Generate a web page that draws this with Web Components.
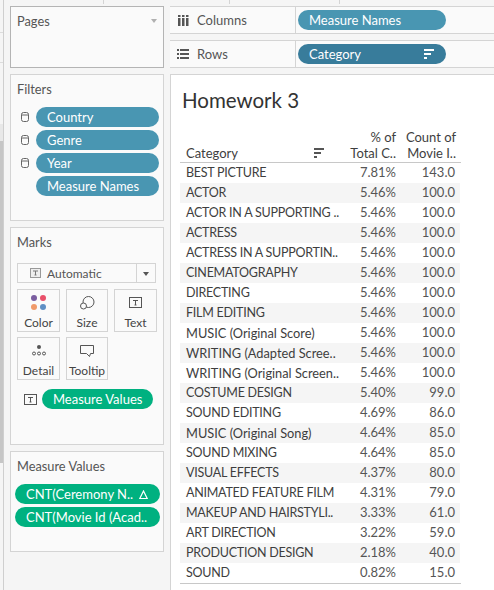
<!DOCTYPE html>
<html>
<head>
<meta charset="utf-8">
<title>Homework 3</title>
<style>
  html, body { margin: 0; padding: 0; height: 100%; }
  body {
    background: #f5f5f5;
    font-family: Lato, "Liberation Sans", sans-serif;
    color: #444;
    overflow: hidden;
  }
</style>
</head>
<body>
<tab-workspace></tab-workspace>

<script>
const FONT = 'Lato, "Liberation Sans", sans-serif';

const ICONS = {
  db: '<svg width="8" height="10" viewBox="0 0 8 10" fill="none" stroke="#666" stroke-width="1"><rect x=".5" y=".5" width="7" height="9" rx="2"/><path d="M.5 3h7"/></svg>',
  text: '<svg width="13" height="11" viewBox="0 0 13 11" fill="none" stroke="#555"><rect x=".5" y=".5" width="12" height="10"/><path d="M4 3.5h5M6.5 3.5v4.5M5.5 8h2"/></svg>',
  textSmall: '<svg width="11" height="10" viewBox="0 0 11 10"><rect x=".5" y=".5" width="10" height="9" fill="#eee" stroke="#999"/><path d="M3 3h5M5.5 3v4M4.5 7h2" fill="none" stroke="#777"/></svg>',
  sort: c => `<svg width="10" height="10" viewBox="0 0 10 10" fill="${c}"><rect width="10" height="2"/><rect y="4" width="7" height="2"/><rect y="8" width="3" height="2"/></svg>`
};

class TabPill extends HTMLElement {
  constructor() {
    super();
    this.attachShadow({ mode: 'open' }).innerHTML = `
      <style>
        :host {
          display: flex;
          align-items: center;
          height: 20px;
          border-radius: 10px;
          background: var(--pill, #4996b2);
          color: #fff;
          font: 13px ${FONT};
          padding: 0 12px 0 11px;
          box-sizing: border-box;
          white-space: nowrap;
        }
        :host([dark]) { --pill: #387c9b; }
        :host([green]) { --pill: #00b180; }
        .t { flex: 1; }
      </style>
      <span class="t"><slot></slot></span><slot name="end"></slot>`;
  }
}
customElements.define('tab-pill', TabPill);

class TabCard extends HTMLElement {
  constructor() {
    super();
    this.attachShadow({ mode: 'open' }).innerHTML = `
      <style>
        :host {
          display: block;
          box-sizing: border-box;
          background: #fafafa;
          border: 1px solid #d4d4d4;
          padding: 6px 4px 0 6px;
          height: var(--h);
          margin-bottom: 6px;
          position: relative;
        }
        :host([dark]) { border-color: #b4b4b4; }
        h3 {
          margin: 0;
          font: 400 12.8px/16px ${FONT};
          color: #555;
        }
      </style>
      <h3>${this.getAttribute('title') || ''}</h3>
      <slot></slot>`;
  }
}
customElements.define('tab-card', TabCard);

class MarkBtn extends HTMLElement {
  constructor() {
    super();
    this.attachShadow({ mode: 'open' }).innerHTML = `
      <style>
        :host {
          display: flex;
          flex-direction: column;
          align-items: center;
          box-sizing: border-box;
          height: 43px;
          background: #fafafa;
          border: 1px solid #d4d4d4;
          font: 12px/16px ${FONT};
          color: #444;
        }
        .i { height: 25px; display: flex; align-items: center; justify-content: center; }
      </style>
      <div class="i"><slot name="icon"></slot></div>
      <slot></slot>`;
  }
}
customElements.define('mark-btn', MarkBtn);

class ShelfRow extends HTMLElement {
  constructor() {
    super();
    this.attachShadow({ mode: 'open' }).innerHTML = `
      <style>
        :host {
          display: flex;
          height: 28px;
          box-sizing: border-box;
          background: #fafafa;
          border-top: 1px solid #d4d4d4;
          border-bottom: 1px solid #d4d4d4;
        }
        .label {
          width: 126px;
          box-sizing: border-box;
          border-right: 1px solid #d4d4d4;
          display: flex;
          align-items: center;
          gap: 7px;
          padding-left: 7px;
          font: 13px ${FONT};
          color: #555;
        }
        .pills { padding: 3px 0 0 2px; }
        ::slotted(tab-pill) { width: 148px; }
      </style>
      <div class="label"><slot name="icon"></slot>${this.getAttribute('label')}</div>
      <div class="pills"><slot></slot></div>`;
  }
}
customElements.define('shelf-row', ShelfRow);

const ROWS = [
  ['BEST PICTURE', '7.81%', '143.0'],
  ['ACTOR', '5.46%', '100.0'],
  ['ACTOR IN A SUPPORTING ..', '5.46%', '100.0'],
  ['ACTRESS', '5.46%', '100.0'],
  ['ACTRESS IN A SUPPORTIN..', '5.46%', '100.0'],
  ['CINEMATOGRAPHY', '5.46%', '100.0'],
  ['DIRECTING', '5.46%', '100.0'],
  ['FILM EDITING', '5.46%', '100.0'],
  ['MUSIC (Original Score)', '5.46%', '100.0'],
  ['WRITING (Adapted Scree..', '5.46%', '100.0'],
  ['WRITING (Original Screen..', '5.46%', '100.0'],
  ['COSTUME DESIGN', '5.40%', '99.0'],
  ['SOUND EDITING', '4.69%', '86.0'],
  ['MUSIC (Original Song)', '4.64%', '85.0'],
  ['SOUND MIXING', '4.64%', '85.0'],
  ['VISUAL EFFECTS', '4.37%', '80.0'],
  ['ANIMATED FEATURE FILM', '4.31%', '79.0'],
  ['MAKEUP AND HAIRSTYLI..', '3.33%', '61.0'],
  ['ART DIRECTION', '3.22%', '59.0'],
  ['PRODUCTION DESIGN', '2.18%', '40.0'],
  ['SOUND', '0.82%', '15.0']
];

class ViewTable extends HTMLElement {
  constructor() {
    super();
    const body = ROWS.map(r => `
      <div class="row"><span class="c${/[a-z]/.test(r[0]) ? ' mixed' : ''}">${r[0]}</span><span class="n">${r[1]}</span><span class="m">${r[2]}</span></div>`).join('');
    this.attachShadow({ mode: 'open' }).innerHTML = `
      <style>
        :host {
          display: block;
          width: 281px;
          font: 13px/16px ${FONT};
          color: #3e3e3e;
          border-bottom: 1px solid #c8c8c8;
        }
        .head {
          display: grid;
          grid-template-columns: 150px 66px 60px;
          height: 32px;
          align-items: end;
          border-bottom: 1px solid #c8c8c8;
          padding: 0 0 1px 0;
        }
        .head .hc { padding-left: 6px; display: flex; justify-content: space-between; align-items: center; padding-right: 6px; }
        .head .r { text-align: right; }
        .row {
          display: grid;
          grid-template-columns: 150px 66px 59px;
          height: 20px;
          align-items: center;
          width: 280px;
        }
        .row:nth-child(even) { background: #f5f5f5; }
        .c { padding-left: 6px; white-space: nowrap; font-size: 12.5px; letter-spacing: -.25px; }
        .c.mixed { font-size: 12.8px; letter-spacing: 0; }
        .n, .m { text-align: right; color: #555; padding-bottom: 2px; }
      </style>
      <div class="head">
        <div class="hc"><span>Category</span>${ICONS.sort('#555')}</div>
        <div class="r">% of<br>Total C..</div>
        <div class="r">Count of<br>Movie I..</div>
      </div>
      <div>${body}</div>`;
  }
}
customElements.define('view-table', ViewTable);

class TabWorkspace extends HTMLElement {
  constructor() {
    super();
    this.attachShadow({ mode: 'open' }).innerHTML = `
      <style>
        :host {
          display: grid;
          grid-template-columns: 170px 1fr;
          height: 590px;
          width: 494px;
          overflow: hidden;
          position: relative;
        }
        .side { padding: 6px 6px 0 10px; }
        .main { padding-top: 6px; display: flex; flex-direction: column; }
        .gap { height: 6px; }
        .strip {
          position: absolute; left: 0; top: 0; bottom: 0; width: 3px;
          border-right: 1px solid #cfcfcf;
        }
        .strip b { position: absolute; left: 0; width: 3px; height: 1px; background: #dcdcdc; }
        .strip i { position: absolute; left: 0; width: 3px; top: 124px; height: 17px; background: #e8e8e8; }
        .strip u { position: absolute; left: 0; width: 3px; top: 141px; height: 322px; background: #c6c6c6; }
        .tick { position: absolute; top: 0; width: 1px; height: 4px; background: #d4d4d4; }
        .view {
          flex: 1;
          background: #fff;
          border-top: 1px solid #d4d4d4;
          border-left: 1px solid #d4d4d4;
          margin-top: 6px;
          padding: 12px 0 0 9px;
        }
        h1 {
          margin: 0 0 16px 2px;
          font: 400 20.5px/26px ${FONT};
          color: #333;
        }
        .caret {
          position: absolute; right: 6px; top: 12px;
          width: 0; height: 0;
          border: 3.5px solid transparent; border-top: 4px solid #b0b0b0;
        }
        .pills { display: flex; flex-direction: column; gap: 3px; margin-top: 10px; }
        .f { display: flex; align-items: center; height: 20px; gap: 7px; margin-left: 4px; }
        .f span.ic { width: 8px; display: flex; }
        .f tab-pill { flex: 1; }
        .dd {
          margin: 13px 0 0 0;
          width: 139px;
          height: 20px;
          box-sizing: border-box;
          border: 1px solid #d4d4d4;
          background: #fafafa;
          display: flex;
          align-items: center;
          font: 12px ${FONT};
          color: #555;
          padding-left: 12px;
          gap: 6px;
        }
        .dd .a { margin-left: auto; width: 18px; height: 18px; border-left: 1px solid #d4d4d4; display: flex; align-items: center; justify-content: center; }
        .dd .a i { border: 3.5px solid transparent; border-top: 4px solid #555; margin-top: 4px; }
        .btns { display: grid; grid-template-columns: 43px 42px 43px; gap: 5px 6px; margin-top: 6px; width: 140px; }
        .mv { display: flex; align-items: center; gap: 5px; margin: 9px 0 0 7px; }
        .mv tab-pill { width: 111px; }
        .mvp { display: flex; flex-direction: column; gap: 3px; margin: 10px -1px 0 -2px; }
      </style>
      <div class="strip"><b style="top:32px"></b><b style="top:62px"></b><i></i><u></u></div>
      <div class="tick" style="left:103px"></div>
      <div class="tick" style="left:229px"></div>
      <div class="tick" style="left:339px"></div>
      <div class="side">
        <tab-card title="Pages" dark style="--h:62px"><div class="caret"></div></tab-card>
        <tab-card title="Filters" style="--h:147px">
          <div class="pills">
            <div class="f"><span class="ic">${ICONS.db}</span><tab-pill>Country</tab-pill></div>
            <div class="f"><span class="ic">${ICONS.db}</span><tab-pill>Genre</tab-pill></div>
            <div class="f"><span class="ic">${ICONS.db}</span><tab-pill>Year</tab-pill></div>
            <div class="f"><span class="ic"></span><tab-pill>Measure Names</tab-pill></div>
          </div>
        </tab-card>
        <tab-card title="Marks" style="--h:218px">
          <div class="dd">${ICONS.textSmall}Automatic<span class="a"><i></i></span></div>
          <div class="btns">
            <mark-btn>
              <svg slot="icon" width="15" height="15" viewBox="0 0 15 15"><circle cx="3" cy="3" r="3" fill="#7a5da0"/><circle cx="12" cy="3" r="3" fill="#e9506a"/><circle cx="3" cy="12" r="3" fill="#f09a6a"/><circle cx="12" cy="12" r="3" fill="#5f8fc4"/></svg>
              Color
            </mark-btn>
            <mark-btn>
              <svg slot="icon" width="15" height="14" viewBox="0 0 15 14" fill="none" stroke="#555"><circle cx="8.5" cy="6" r="5.5"/><circle cx="3.5" cy="10" r="3" fill="#fafafa"/></svg>
              Size
            </mark-btn>
            <mark-btn>
              <span slot="icon" style="display:flex">${ICONS.text}</span>
              Text
            </mark-btn>
            <mark-btn>
              <svg slot="icon" width="14" height="11" viewBox="0 0 14 11" fill="none" stroke="#555"><circle cx="7" cy="2" r="2" fill="#555" stroke="none"/><circle cx="2" cy="8.5" r="1.5"/><circle cx="7" cy="8.5" r="1.5"/><circle cx="12" cy="8.5" r="1.5"/></svg>
              Detail
            </mark-btn>
            <mark-btn>
              <svg slot="icon" width="14" height="12" viewBox="0 0 14 12" fill="none" stroke="#555"><path d="M.5.5h13v8h-3l-1 3-3-3H.5z"/></svg>
              Tooltip
            </mark-btn>
          </div>
          <div class="mv">${ICONS.text}<tab-pill green>Measure Values</tab-pill></div>
        </tab-card>
        <tab-card title="Measure Values" style="--h:101px">
          <div class="mvp">
            <tab-pill green>CNT(Ceremony N..<svg slot="end" width="9" height="9" viewBox="0 0 9 9" fill="none" stroke="#fff" stroke-width="1.2"><path d="M4.5 1L.8 8.5h7.4z"/></svg></tab-pill>
            <tab-pill green>CNT(Movie Id (Acad..</tab-pill>
          </div>
        </tab-card>
      </div>
      <div class="main">
        <shelf-row label="Columns">
          <svg slot="icon" width="13" height="11" viewBox="0 0 13 11" fill="#555"><rect x="1" width="2.5" height="2"/><rect x="5" width="2.5" height="2"/><rect x="9" width="2.5" height="2"/><rect x="1" y="3" width="2.5" height="8"/><rect x="5" y="3" width="2.5" height="8"/><rect x="9" y="3" width="2.5" height="8"/></svg>
          <tab-pill>Measure Names</tab-pill>
        </shelf-row>
        <div class="gap"></div>
        <shelf-row label="Rows">
          <svg slot="icon" width="13" height="10" viewBox="0 0 13 10" fill="#555"><rect width="2" height="2"/><rect x="3" width="9" height="2"/><rect y="4" width="2" height="2"/><rect x="3" y="4" width="9" height="2"/><rect y="8" width="2" height="2"/><rect x="3" y="8" width="9" height="2"/></svg>
          <tab-pill dark>Category<span slot="end" style="display:flex">${ICONS.sort('#fff')}</span></tab-pill>
        </shelf-row>
        <div class="view">
          <h1>Homework 3</h1>
          <view-table></view-table>
        </div>
      </div>`;
  }
}
customElements.define('tab-workspace', TabWorkspace);
</script>
</body>
</html>
